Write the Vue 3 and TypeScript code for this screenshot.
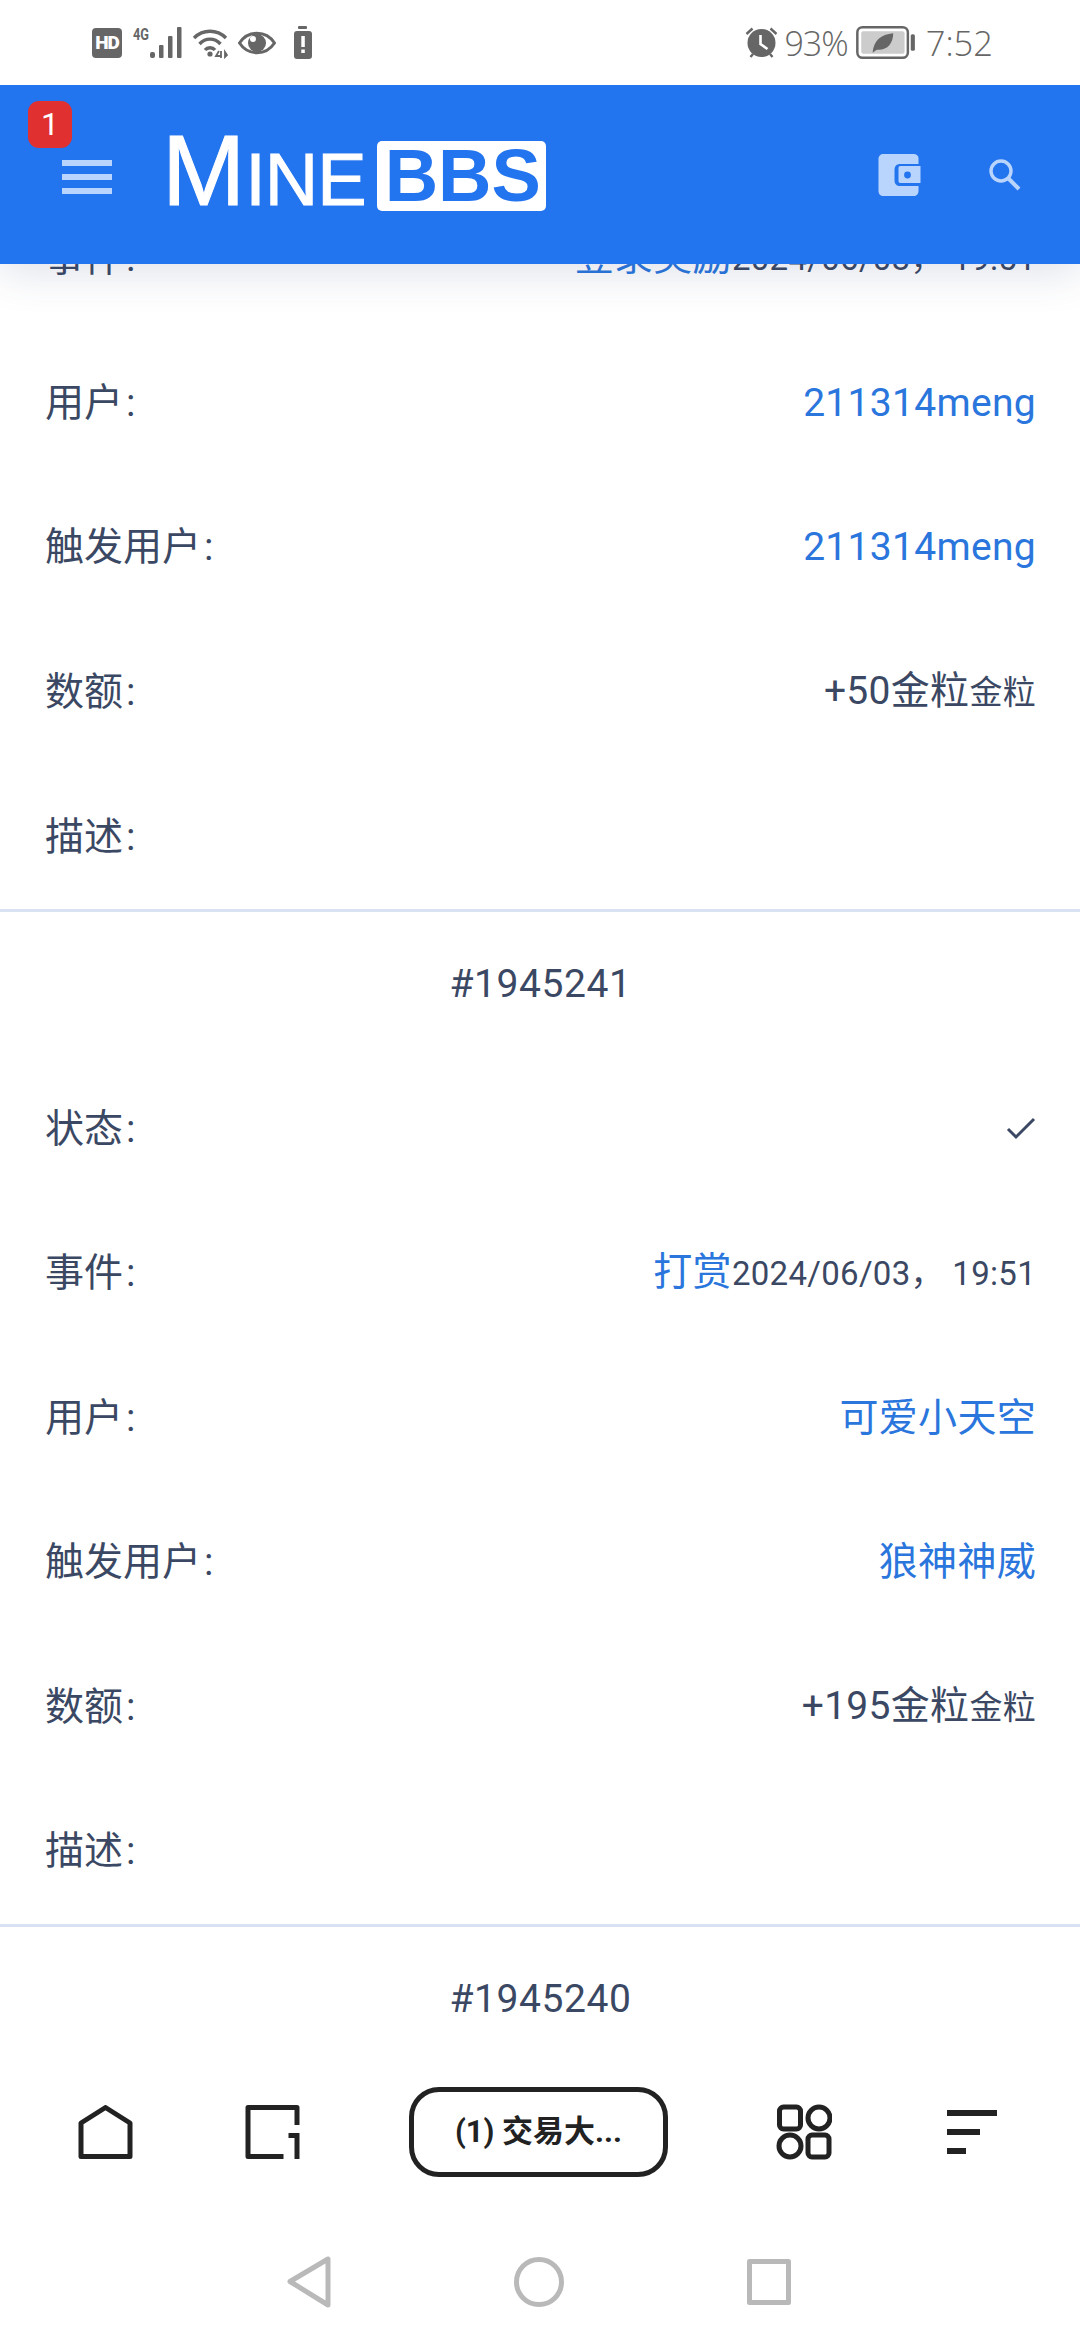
<template>
  <div class="screen">
    <div class="status">
      <div class="status-left">
        <div class="hd">HD</div>
        <div class="net">
          <span class="g4">4G</span>
          <svg width="32" height="32" viewBox="0 0 32 32" fill="#666">
            <rect x="0" y="25" width="5" height="6" rx="2" />
            <rect x="9" y="18" width="4.500" height="13" rx="1" />
            <rect x="18" y="9" width="4.500" height="22" rx="1" />
            <rect x="27" y="0" width="4.500" height="31" rx="1" />
          </svg>
        </div>
        <svg class="wifi" width="36" height="32" viewBox="0 0 36 32" fill="none" stroke="#666" stroke-width="3.4">
          <path d="M2 11C11 2 25 2 34 11" />
          <path d="M7.5 17C13.5 10.5 22.5 10.5 28.5 17" />
          <path d="M13 23C15.5 20 20.5 20 23 23" />
          <circle cx="18" cy="27" r="2.6" fill="#666" stroke="none" />
          <path d="M27 24L24 29H29M29 24V31M33 25V30L35 28Z" stroke-width="1.8" />
        </svg>
        <svg class="eye" width="38" height="26" viewBox="0 0 38 26">
          <path d="M1.5 13C10 0 28 0 36.5 13C28 26 10 26 1.5 13Z" fill="none" stroke="#666" stroke-width="3" />
          <circle cx="19" cy="13" r="9" fill="#666" />
          <circle cx="15" cy="9" r="3" fill="#fff" />
        </svg>
        <svg class="batt" width="18" height="33" viewBox="0 0 18 33">
          <rect x="4" y="0" width="9" height="3" rx="1" fill="#666" />
          <rect x="0" y="5" width="18" height="28" rx="3" fill="#666" />
          <rect x="7.300" y="10" width="3.500" height="11" fill="#fff" />
          <rect x="7.300" y="23.500" width="3.500" height="3.500" fill="#fff" />
        </svg>
      </div>
      <div class="status-right">
        <svg class="alarm" width="33" height="32" viewBox="0 0 32 32">
          <path d="M1 7L7 1.5M31 7L25 1.5M5 30L7.5 27M27 30L24.5 27" stroke="#666" stroke-width="2.4" fill="none" />
          <circle cx="16" cy="16" r="14" fill="#666" />
          <path d="M15 8V17L22 22" stroke="#fff" stroke-width="2.6" fill="none" />
        </svg>
        <span class="pct">93%</span>
        <svg class="leaf-batt" width="60" height="33" viewBox="0 0 58 32">
          <rect x="1.2" y="1.2" width="49" height="29.6" rx="5" fill="none" stroke="#666" stroke-width="2.4" />
          <rect x="5" y="5" width="42" height="22" rx="2" fill="#ccc" />
          <rect x="53" y="8" width="4" height="16" rx="1.5" fill="#666" />
          <path d="M16 26C17 14 24 8 36 7C36 17 30 24 20 23L16 26Z" fill="#666" />
        </svg>
        <span class="time">7:52</span>
      </div>
    </div>

    <header class="topbar">
      <span class="badge">1</span>
      <div class="menu"><i></i><i></i><i></i></div>
      <div class="logo">
        <span class="logo-m">M</span><span class="logo-ine">INE</span>
        <span class="logo-bbs">BBS</span>
      </div>
      <svg class="wallet" width="43" height="42" viewBox="0 0 42 42">
        <path d="M5 0H35C38 0 40 2 40 4V10H22C18 10 16 12 16 16V26C16 30 18 32 22 32H40V37C40 40 38 42 35 42H5C2 42 0 40 0 37V5C0 2 2 0 5 0Z" fill="#b9d5fd" />
        <path d="M22 12H42V29H22C20 29 20 28 20 26V15C20 13 20 12 22 12Z" fill="#b9d5fd" />
        <circle cx="29" cy="21" r="3.4" fill="#2374ef" />
      </svg>
      <svg class="search" width="32" height="32" viewBox="0 0 32 32" fill="none" stroke="#b9d5fd" stroke-width="3.4">
        <circle cx="12" cy="12" r="10" />
        <path d="M19 19L30 30" stroke-width="4" />
      </svg>
    </header>

    <main class="list">
      <section v-for="(group, i) in groups" :key="i" class="group">
        <div v-if="group.id" class="row row-id">{{ group.id }}</div>
        <div v-for="row in group.rows" :key="row.label" class="row">
          <span class="label">{{ row.label }}<span class="colon">:</span></span>
          <span class="value">
            <svg v-if="row.check" width="30" height="24" viewBox="0 0 30 24" fill="none" stroke="#3b4863" stroke-width="3">
              <path d="M2 12L10 20L28 2" />
            </svg>
            <a v-if="row.link" class="link">{{ row.link }}</a>
            <template v-if="row.text">{{ row.text }}</template>
            <small v-if="row.small">{{ row.small }}</small>
          </span>
        </div>
      </section>
    </main>

    <nav class="browser">
      <svg width="55" height="54" viewBox="0 0 54 54" fill="none" stroke="#222" stroke-width="5" stroke-linejoin="round">
        <path d="M27 2.5L51.5 18V51.5H2.5V18Z" />
      </svg>
      <svg class="nav-tabs" width="55" height="54" viewBox="0 0 54 54" fill="none" stroke="#222" stroke-width="5" stroke-linejoin="round">
        <path d="M38 51.5H2.5V2.5H51.5V20" />
        <path d="M43 30.500H51.500V54" stroke-linejoin="miter" />
      </svg>
      <div class="tab-pill">(1) 交易大...</div>
      <svg class="nav-grid" width="56" height="56" viewBox="0 0 54 56" fill="none" stroke="#222" stroke-width="5">
        <rect x="2.5" y="3" width="21" height="22" rx="4" />
        <circle cx="42" cy="14" r="11" />
        <circle cx="13" cy="42" r="11" />
        <rect x="31" y="31" width="21" height="22" rx="4" />
      </svg>
      <div class="sort"><i></i><i></i><i></i></div>
    </nav>

    <div class="sysnav">
      <svg width="44" height="52" viewBox="0 0 44 52" fill="none" stroke="#b9b9b9" stroke-width="5" stroke-linejoin="round">
        <path d="M41 3V49L3 25.500Z" />
      </svg>
      <svg width="50" height="50" viewBox="0 0 50 50" fill="none" stroke="#b9b9b9" stroke-width="5">
        <circle cx="25" cy="25" r="22.500" />
      </svg>
      <svg width="44" height="46" viewBox="0 0 44 46" fill="none" stroke="#b9b9b9" stroke-width="5" stroke-linejoin="round">
        <rect x="2.500" y="2.500" width="39" height="41" />
      </svg>
    </div>
  </div>
</template>

<script setup lang="ts">
interface Row {
  label: string;
  link?: string;
  text?: string;
  small?: string;
  check?: boolean;
}

interface Group {
  id?: string;
  rows: Row[];
}

const groups: Group[] = [
  {
    rows: [
      { label: '事件', link: '登录奖励', small: '2024/06/03， 19:51' },
      { label: '用户', link: '211314meng' },
      { label: '触发用户', link: '211314meng' },
      { label: '数额', text: '+50金粒', small: '金粒' },
      { label: '描述' }
    ]
  },
  {
    id: '#1945241',
    rows: [
      { label: '状态', check: true },
      { label: '事件', link: '打赏', small: '2024/06/03， 19:51' },
      { label: '用户', link: '可爱小天空' },
      { label: '触发用户', link: '狼神神威' },
      { label: '数额', text: '+195金粒', small: '金粒' },
      { label: '描述' }
    ]
  },
  {
    id: '#1945240',
    rows: []
  }
];
</script>

<style scoped>
.screen {
  width: 1080px;
  height: 2340px;
  display: flex;
  flex-direction: column;
  overflow: hidden;
  background: #fff;
  font-family: Roboto, "Noto Sans CJK SC", sans-serif;
  color: #3b4863;
}

.status {
  height: 85px;
  flex: none;
  display: flex;
  justify-content: space-between;
  align-items: center;
  padding: 0 87px 0 92px;
  color: #666;
  background: #fff;
  position: relative;
  z-index: 3;
}

.status-left,
.status-right {
  display: flex;
  align-items: center;
}

.hd {
  width: 30px;
  height: 30px;
  border-radius: 4px;
  background: #666;
  color: #fff;
  font-size: 19px;
  font-weight: 900;
  line-height: 30px;
  text-align: center;
  letter-spacing: -1px;
}

.net {
  display: flex;
  align-items: flex-start;
  margin-left: 11px;
  height: 32px;
}

.g4 {
  font-size: 16px;
  line-height: 16px;
  font-weight: 700;
  transform: scaleX(0.8);
  transform-origin: left;
  width: 17px;
}

.wifi {
  margin-left: 10px;
}

.eye {
  margin-left: 10px;
}

.batt {
  margin-left: 18px;
}

.pct {
  margin-left: 6px;
  font-size: 34px;
  font-weight: 300;
  letter-spacing: -1px;
  font-family: "Open Sans", sans-serif;
}

.leaf-batt {
  margin-left: 8px;
}

.time {
  margin-left: 10px;
  font-size: 34.5px;
  font-weight: 300;
  font-family: "Open Sans", sans-serif;
}

.topbar {
  position: relative;
  z-index: 2;
  flex: none;
  height: 179px;
  display: flex;
  align-items: center;
  padding: 0 59px 0 62px;
  background: #2374ef;
  box-shadow: 0 8px 40px rgba(50, 70, 120, 0.16);
}

.badge {
  position: absolute;
  left: 28px;
  top: 16px;
  width: 44px;
  height: 47px;
  border-radius: 11px;
  background: #e03030;
  color: #fff;
  font-size: 32px;
  line-height: 47px;
  text-align: center;
}

.menu {
  display: flex;
  flex-direction: column;
  gap: 8px;
  margin-top: 5px;
}

.menu i {
  display: block;
  width: 50px;
  height: 6px;
  background: #b9d5fd;
}

.logo {
  display: flex;
  align-items: baseline;
  margin-left: 50px;
  margin-top: 1px;
  color: #fff;
  font-family: "Liberation Sans", sans-serif;
  -webkit-text-stroke: 1px #fff;
}

.logo-m {
  font-size: 100px;
  line-height: 70px;
}

.logo-ine {
  font-size: 74px;
  line-height: 70px;
  letter-spacing: -1px;
}

.logo-bbs {
  box-sizing: border-box;
  width: 169px;
  margin-left: 11px;
  padding: 0 3px 0 8px;
  height: 70px;
  border-radius: 5px;
  background: #fff;
  color: #2374ef;
  font-size: 74px;
  font-weight: 700;
  line-height: 70px;
  -webkit-text-stroke: 0;
  transform: translateY(-4px);
}

.wallet {
  margin-left: auto;
}

.search {
  margin-left: 68px;
}

.list {
  flex: 1;
  min-height: 0;
  margin-top: -78px;
  overflow: hidden;
}

.group {
  border-bottom: 3px solid #d8e2f2;
}

.group:last-child {
  border-bottom: 0;
}

.row {
  height: 144.57px;
  box-sizing: border-box;
  display: flex;
  align-items: center;
  justify-content: space-between;
  padding: 0 44px 0 45px;
  font-size: 39px;
  line-height: 48px;
}

.row-id {
  justify-content: center;
  letter-spacing: 0.6px;
}

.colon {
  margin-left: 3px;
}

.value {
  display: flex;
  align-items: baseline;
  letter-spacing: 0.3px;
}

.link {
  color: #2a76dd;
}

small {
  font-size: 33px;
}

.browser {
  flex: none;
  height: 184px;
  display: flex;
  align-items: center;
  padding-left: 78px;
  background: #fff;
}

.nav-tabs {
  margin-left: 112px;
}

.tab-pill {
  box-sizing: border-box;
  width: 259px;
  height: 90px;
  margin-left: 109px;
  border: 5px solid #222;
  border-radius: 30px;
  color: #222;
  font-size: 31px;
  font-weight: 700;
  line-height: 80px;
  text-align: center;
}

.nav-grid {
  margin-left: 108px;
}

.sort {
  width: 50px;
  margin-left: 115px;
  display: flex;
  flex-direction: column;
  gap: 13px;
}

.sort i {
  display: block;
  height: 6px;
  background: #222;
}

.sort i:nth-child(2) {
  width: 33px;
}

.sort i:nth-child(3) {
  width: 19px;
}

.sysnav {
  flex: none;
  height: 116px;
  display: flex;
  align-items: center;
  justify-content: space-between;
  padding: 0 289px 0 287px;
}
</style>

<style>
html,
body {
  margin: 0;
  background: #fff;
}
</style>
